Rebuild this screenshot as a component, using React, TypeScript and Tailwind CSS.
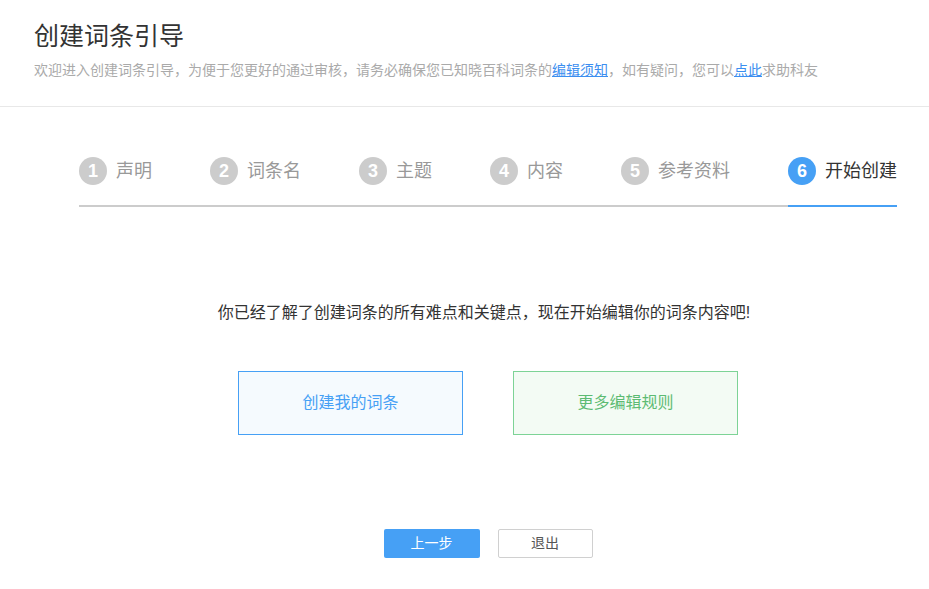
import React from 'react';

const steps = [
  { n: 1, label: '声明' },
  { n: 2, label: '词条名' },
  { n: 3, label: '主题' },
  { n: 4, label: '内容' },
  { n: 5, label: '参考资料' },
  { n: 6, label: '开始创建' },
];

const active = 6;

export default function App() {
  return (
    <div
      className="min-h-[589px] bg-white"
      style={{ fontFamily: '"Liberation Sans", "Noto Sans CJK SC", sans-serif' }}
    >
      {/* Header */}
      <header className="h-[107px] border-b border-[#e8e8e8] px-[34px] pt-[20px]">
        <h1 className="text-[25px] leading-[32px] text-[#333]">创建词条引导</h1>
        <p className="mt-[8px] text-[14px] leading-[20px] text-[#aaa]">
          欢迎进入创建词条引导，为便于您更好的通过审核，请务必确保您已知晓百科词条的
          <a className="text-[#3b8ef0] underline">编辑须知</a>
          ，如有疑问，您可以
          <a className="text-[#3b8ef0] underline">点此</a>
          求助科友
        </p>
      </header>

      <main className="ml-[79px] w-[818px]">
        {/* Steps */}
        <div className="mt-[50px] flex justify-between border-b-2 border-[#cccccc]">
          {steps.map((s) => {
            const isActive = s.n === active;
            return (
              <div
                key={s.n}
                className={`flex items-center gap-[9px] pb-[20px] ${
                  isActive ? '-mb-[2px] border-b-2 border-[#46a0f5]' : ''
                }`}
              >
                <span
                  className={`flex h-[28px] w-[28px] items-center justify-center rounded-full text-[18px] font-bold text-white ${
                    isActive ? 'bg-[#46a0f5]' : 'bg-[#cccccc]'
                  }`}
                >
                  {s.n}
                </span>
                <span className={`text-[18px] leading-[28px] ${isActive ? 'text-[#333]' : 'text-[#999]'}`}>
                  {s.label}
                </span>
              </div>
            );
          })}
        </div>

        {/* Message */}
        <p className="mt-[95px] pr-[8px] text-center text-[16px] leading-[22px] text-[#333]">
          你已经了解了创建词条的所有难点和关键点，现在开始编辑你的词条内容吧!
        </p>

        <div className="mt-[47px] flex justify-center gap-[50px]">
          <button className="flex h-[64px] w-[225px] items-center justify-center border border-[#46a0f5] bg-[#f5fafe] text-[16px] text-[#46a0f5]">
            创建我的词条
          </button>
          <button className="flex h-[64px] w-[225px] items-center justify-center border border-[#7dd396] bg-[#f3fbf4] text-[16px] text-[#5dbb73]">
            更多编辑规则
          </button>
        </div>

        {/* Footer buttons */}
        <div className="mt-[94px] flex justify-center gap-[18px]">
          <button className="h-[29px] w-[96px] rounded-[2px] bg-[#46a0f5] text-[14px] text-white">上一步</button>
          <button className="h-[29px] w-[95px] rounded-[2px] border border-[#d0d0d0] bg-white text-[14px] text-[#555]">
            退出
          </button>
        </div>
      </main>
    </div>
  );
}
